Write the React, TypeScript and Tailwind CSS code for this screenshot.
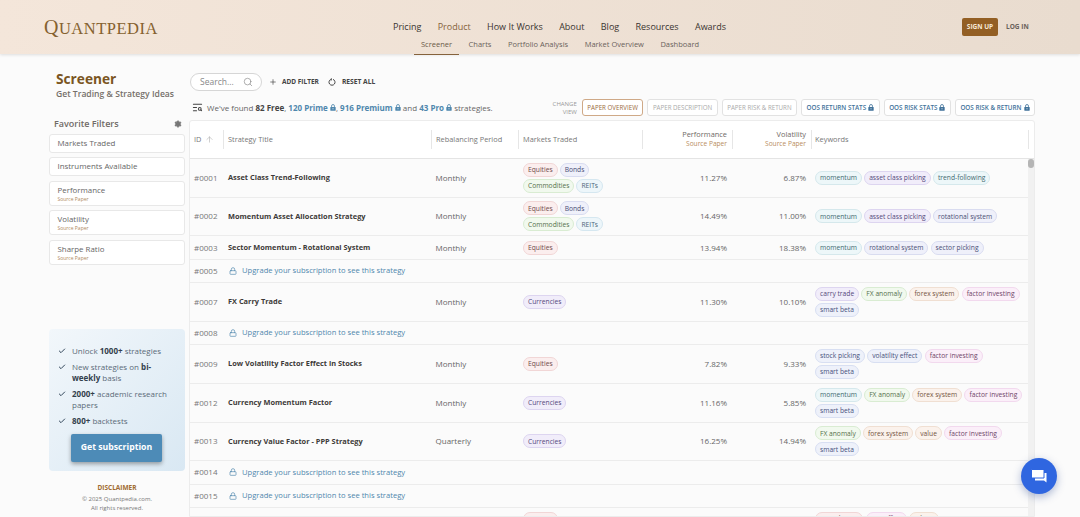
import { ArrowUp, Check, Lock, Plus, Search, Settings, TextSearch } from "lucide-react";

type Tone = "red" | "indigo" | "green" | "sky" | "violet" | "teal" | "peach" | "pink" | "blue";

const toneClass: Record<Tone, string> = {
  red: "bg-[#fbeeee] border-[#f1d6d6] text-[#6e4a4a]",
  indigo: "bg-[#eff0fa] border-[#d9dcf0] text-[#4a4f75]",
  green: "bg-[#f1f9ee] border-[#d9ecd2] text-[#55704c]",
  sky: "bg-[#edf6fa] border-[#d5e7f0] text-[#4a6578]",
  violet: "bg-[#f1edfa] border-[#ddd5f0] text-[#54487a]",
  teal: "bg-[#edf7f9] border-[#d5e8ec] text-[#3f6a70]",
  peach: "bg-[#fbf2ec] border-[#f0dfd2] text-[#75543f]",
  pink: "bg-[#fbeff9] border-[#f2d9ee] text-[#6f4568]",
  blue: "bg-[#eef1fa] border-[#d8dff2] text-[#46507a]",
};

const marketTones: Record<string, Tone> = {
  Equities: "red",
  Bonds: "indigo",
  Commodities: "green",
  REITs: "sky",
  Currencies: "violet",
};

const keywordTones: Record<string, Tone> = {
  momentum: "teal",
  "asset class picking": "violet",
  "trend-following": "teal",
  "rotational system": "indigo",
  "sector picking": "indigo",
  "carry trade": "violet",
  "FX anomaly": "green",
  "forex system": "peach",
  "factor investing": "pink",
  "smart beta": "blue",
  "stock picking": "blue",
  "volatility effect": "blue",
  value: "peach",
  "capital asset": "red",
  "size effect": "pink",
  others: "peach",
};

type Row = {
  id: string;
  tall?: boolean;
  title?: string;
  period?: string;
  markets?: string[];
  perf?: string;
  vol?: string;
  keywords?: string[];
};

const rows: Row[] = [
  { id: "#0001", tall: true, title: "Asset Class Trend-Following", period: "Monthly", markets: ["Equities", "Bonds", "Commodities", "REITs"], perf: "11.27%", vol: "6.87%", keywords: ["momentum", "asset class picking", "trend-following"] },
  { id: "#0002", tall: true, title: "Momentum Asset Allocation Strategy", period: "Monthly", markets: ["Equities", "Bonds", "Commodities", "REITs"], perf: "14.49%", vol: "11.00%", keywords: ["momentum", "asset class picking", "rotational system"] },
  { id: "#0003", title: "Sector Momentum - Rotational System", period: "Monthly", markets: ["Equities"], perf: "13.94%", vol: "18.38%", keywords: ["momentum", "rotational system", "sector picking"] },
  { id: "#0005" },
  { id: "#0007", tall: true, title: "FX Carry Trade", period: "Monthly", markets: ["Currencies"], perf: "11.30%", vol: "10.10%", keywords: ["carry trade", "FX anomaly", "forex system", "factor investing", "smart beta"] },
  { id: "#0008" },
  { id: "#0009", tall: true, title: "Low Volatility Factor Effect in Stocks", period: "Monthly", markets: ["Equities"], perf: "7.82%", vol: "9.33%", keywords: ["stock picking", "volatility effect", "factor investing", "smart beta"] },
  { id: "#0012", tall: true, title: "Currency Momentum Factor", period: "Monthly", markets: ["Currencies"], perf: "11.16%", vol: "5.85%", keywords: ["momentum", "FX anomaly", "forex system", "factor investing", "smart beta"] },
  { id: "#0013", tall: true, title: "Currency Value Factor - PPP Strategy", period: "Quarterly", markets: ["Currencies"], perf: "16.25%", vol: "14.94%", keywords: ["FX anomaly", "forex system", "value", "factor investing", "smart beta"] },
  { id: "#0014" },
  { id: "#0015" },
  { id: "#0016", title: "Pulse Trading with Stocks", period: "Daily", markets: ["Equities"], perf: "9.48%", vol: "8.88%", keywords: ["capital asset", "size effect", "others"] },
];

const gridCols = "grid grid-cols-[34px_208px_87px_124px_90px_79px_1fr]";

function Tag({ label, tone }: { label: string; tone: Tone }) {
  return (
    <span className={`inline-flex h-[14px] items-center rounded-full border px-[4px] pt-[1px] text-[6.7px] leading-none ${toneClass[tone]}`}>
      {label}
    </span>
  );
}

// solid padlock used next to the paid plan names
function SolidLock({ className = "" }: { className?: string }) {
  return (
    <svg viewBox="0 0 10 12" className={`inline-block h-[7px] w-[6px] align-[-0.5px] ${className}`}>
      <path d="M2.5 5V3.4a2.5 2.5 0 0 1 5 0V5" fill="none" stroke="currentColor" strokeWidth="1.4" />
      <path d="M1 5h8a.6.6 0 0 1 .6.6v5.2a.6.6 0 0 1-.6.6H1a.6.6 0 0 1-.6-.6V5.600A.6.6 0 0 1 1 5z" fill="currentColor" />
      <circle cx="5" cy="8.200" r="1" fill="#fff" />
    </svg>
  );
}

function StrategyRow({ row }: { row: Row }) {
  return (
    <div className={`${gridCols} ${row.tall ? "h-[38.8px]" : "h-[23.25px]"} shrink-0 items-center border-b border-[#ececec] text-[8px] text-[#666]`}>
      <div className="pl-[4px] text-[#777]">{row.id}</div>
      {row.title ? (
        <>
          <div className="pl-[4px] text-[7.4px] font-bold text-[#3d3a38]">{row.title}</div>
          <div className="pl-[3.500px]">{row.period}</div>
          <div className="flex flex-wrap gap-x-[2px] gap-y-[2px] pr-[20px] pl-[4px]">
            {row.markets?.map((m) => <Tag key={m} label={m} tone={marketTones[m]} />)}
          </div>
          <div className="pr-[6px] text-right">{row.perf}</div>
          <div className="pr-[6px] text-right">{row.vol}</div>
          <div className="flex flex-wrap gap-x-[2.2px] gap-y-[2px] pr-[3px] pl-[3px]">
            {row.keywords?.map((k) => <Tag key={k} label={k} tone={keywordTones[k]} />)}
          </div>
        </>
      ) : (
        <div className="col-span-6 flex items-center gap-[5px] pl-[5px] text-[7.6px] text-[#4f87ad]">
          <Lock className="h-[8px] w-[8px]" strokeWidth={2} />
          Upgrade your subscription to see this strategy
        </div>
      )}
    </div>
  );
}

function HeaderCell({ children, className = "" }: { children: React.ReactNode; className?: string }) {
  return (
    <div className={`flex h-[19px] items-center border-r border-[#e6e6e6] ${className}`}>{children}</div>
  );
}

function PaperHead({ label }: { label: string }) {
  return (
    <div className="leading-[10px]">
      <div className="text-[#6f6a66]">{label}</div>
      <div className="text-[6.6px] text-[#b98d5e]">Source Paper</div>
    </div>
  );
}

function ViewButton({ label, kind }: { label: string; kind: "active" | "plain" | "locked" }) {
  const cls =
    kind === "active"
      ? "border-[#cfa987] text-[#9a6a3c] text-[6.200px]"
      : kind === "plain"
        ? "border-[#e2e2e2] text-[#aaa] text-[6.200px]"
        : "border-[#e2e2e2] font-semibold text-[#41729a] text-[6.300px]";
  return (
    <span className={`flex h-[17px] items-center gap-[2px] rounded-[3px] border bg-white px-[4.5px] whitespace-nowrap ${cls}`}>
      {label}
      {kind === "locked" && <SolidLock />}
    </span>
  );
}

function FilterBox({ label, sub }: { label: string; sub?: boolean }) {
  return (
    <div className={`flex flex-col justify-center rounded-[3px] border border-[#e8e8e8] bg-white px-[7.500px] ${sub ? "h-[25px]" : "h-[19px]"}`}>
      <div className="text-[7.9px] leading-[11px] text-[#666]">{label}</div>
      {sub && <div className="text-[5px] leading-[6px] text-[#b08a5e]">Source Paper</div>}
    </div>
  );
}

function Perk({ children }: { children: React.ReactNode }) {
  return (
    <li className="flex gap-[6px] text-[8px] leading-[11.3px] text-[#5b6b78]">
      <Check className="mt-[2px] h-[8px] w-[8px] shrink-0 text-[#33475b]" strokeWidth={3} />
      <span className="w-[97px]">{children}</span>
    </li>
  );
}

export default function App() {
  return (
    <div className="relative flex h-[517px] w-[1080px] flex-col overflow-hidden bg-[#fbfbfb] font-['Open_Sans',sans-serif]">
      {/* Top bar */}
      <header className="relative z-10 flex h-[54px] shrink-0 bg-gradient-to-r from-[#f4e6da] to-[#e9dccf] shadow-[0_1px_3px_rgba(0,0,0,0.12)]">
        <div className="w-[393px] pt-[15px] pl-[44px] font-['Liberation_Serif',serif] text-[16.5px] leading-[24px] tracking-[0.5px] text-[#85612f]">
          <span className="text-[20px]">Q</span>UANTPEDIA
        </div>
        <div className="flex w-[366px] flex-col items-start">
          <nav className="mt-[20px] flex gap-[16.3px] text-[9px] leading-[14px] text-[#3a3430]">
            <span>Pricing</span>
            <span className="text-[#85623c]">Product</span>
            <span>How It Works</span>
            <span>About</span>
            <span>Blog</span>
            <span>Resources</span>
            <span>Awards</span>
          </nav>
          <nav className="mt-[5px] ml-[21px] flex gap-[16.5px] text-[7.5px] text-[#6a625b]">
            <span className="-mr-[7px] border-b border-[#85623c] px-[7px] pb-[4px] text-[#6a5a48]">Screener</span>
            <span>Charts</span>
            <span>Portfolio Analysis</span>
            <span>Market Overview</span>
            <span>Dashboard</span>
          </nav>
        </div>
        <div className="ml-[203px] mt-[18px] flex h-[18px] items-center">
          <span className="flex h-[18px] w-[36px] items-center justify-center rounded-[2px] bg-[#935f24] text-[6.5px] font-bold text-[#f6e8d6]">SIGN UP</span>
          <span className="ml-[8px] text-[6.5px] font-bold text-[#6a625b]">LOG IN</span>
        </div>
      </header>

      <main className="flex min-h-0 flex-1">
        {/* Sidebar */}
        <aside className="ml-[49px] w-[136px] shrink-0">
          <div className="pt-[16px] pl-[7px]">
            <h1 className="text-[13.7px] leading-[17px] font-bold text-[#7a5522]">Screener</h1>
            <p className="mt-[1px] text-[8.6px] leading-[13px] font-semibold text-[#756f69]">Get Trading &amp; Strategy Ideas</p>
          </div>
          <div className="mt-[16px] flex items-center justify-between pr-[3px] pl-[5px] text-[9px] font-semibold text-[#6f6a66]">
            Favorite Filters
            <Settings className="h-[8px] w-[8px] fill-[#777] text-[#777]" strokeWidth={2} />
          </div>
          <div className="mt-[3px] flex flex-col gap-[4.6px]">
            <FilterBox label="Markets Traded" />
            <FilterBox label="Instruments Available" />
            <FilterBox label="Performance" sub />
            <FilterBox label="Volatility" sub />
            <FilterBox label="Sharpe Ratio" sub />
          </div>
          <div className="mt-[64px] h-[142px] rounded-[4px] bg-gradient-to-br from-[#f2f7fb] to-[#d9e8f3] px-[9px] pt-[16px]">
            <ul className="flex flex-col gap-[4.7px]">
              <Perk>Unlock <b className="text-[#33404c]">1000+</b> strategies</Perk>
              <Perk>New strategies on <b className="text-[#33404c]">bi-weekly</b> basis</Perk>
              <Perk><b className="text-[#33404c]">2000+</b> academic research papers</Perk>
              <Perk><b className="text-[#33404c]">800+</b> backtests</Perk>
            </ul>
            <div className="mt-[7px] ml-[13px] flex h-[28px] w-[91px] items-center justify-center rounded-[2px] bg-[#4d8bb7] text-[8.7px] font-bold text-white shadow-[0_2px_4px_rgba(0,0,0,0.35)]">
              Get subscription
            </div>
          </div>
          <div className="mt-[12px] text-center text-[6px] leading-[9px] text-[#777]">
            <div className="text-[6.5px] font-bold text-[#a06c30]">DISCLAIMER</div>
            <div className="mt-[3px]">© 2025 Quantpedia.com.</div>
            <div>All rights reserved.</div>
          </div>
        </aside>

        {/* Content */}
        <section className="ml-[4px] flex w-[846px] min-w-0 flex-col">
          <div className="mt-[19px] flex h-[18px] shrink-0 items-center">
            <div className="ml-[1px] flex h-[18px] w-[72px] items-center justify-between rounded-full border border-[#d6d6d6] bg-white pr-[8px] pl-[9px] text-[8.5px] text-[#888]">
              Search...
              <Search className="h-[10px] w-[10px]" strokeWidth={1.6} />
            </div>
            <Plus className="ml-[7px] h-[8px] w-[8px] text-[#444]" strokeWidth={2} />
            <span className="ml-[5px] text-[6.5px] font-bold text-[#444]">ADD FILTER</span>
            <svg viewBox="0 0 12 12" className="ml-[9px] h-[8px] w-[8px] text-[#444]" fill="none" stroke="currentColor" strokeWidth="1.5">
              <path d="M7.6 2.100a4.500 4.500 0 1 1-3.200 0" />
              <path d="M4.200 .4 6 2.100 4.200 3.800" />
            </svg>
            <span className="ml-[6px] text-[6.7px] font-bold text-[#444]">RESET ALL</span>
          </div>
          <div className="mt-[5px] flex h-[23px] shrink-0 items-center">
            <TextSearch className="ml-[3px] h-[11px] w-[11px] text-[#444]" strokeWidth={2.2} />
            <span className="ml-[4px] text-[8px] whitespace-nowrap text-[#666]">
              We've found <b className="text-[#444]">82 Free</b>, <b className="text-[#4f87ad]">120 Prime <SolidLock /></b>, <b className="text-[#4f87ad]">916 Premium <SolidLock /></b> and <b className="text-[#4f87ad]">43 Pro <SolidLock /></b> strategies.
            </span>
            <span className="ml-auto w-[29px] text-right text-[6px] leading-[8px] text-[#999]">CHANGE<br />VIEW</span>
            <div className="ml-[5px] flex gap-[4px]">
              <ViewButton label="PAPER OVERVIEW" kind="active" />
              <ViewButton label="PAPER DESCRIPTION" kind="plain" />
              <ViewButton label="PAPER RISK & RETURN" kind="plain" />
              <ViewButton label="OOS RETURN STATS" kind="locked" />
              <ViewButton label="OOS RISK STATS" kind="locked" />
              <ViewButton label="OOS RISK & RETURN" kind="locked" />
            </div>
          </div>

          {/* Table */}
          <div className="relative mt-[1px] flex min-h-0 flex-1 flex-col overflow-hidden rounded-t-[3px] border-x border-t border-b border-[#ececec] bg-white">
            <div className={`${gridCols} h-[37.8px] shrink-0 items-center border-b border-[#e4e4e4] text-[7.4px] text-[#777]`}>
              <HeaderCell className="gap-[4px] pl-[4px]">ID <ArrowUp className="h-[9px] w-[9px] text-[#aaa]" strokeWidth={1.5} /></HeaderCell>
              <HeaderCell className="pl-[4px]">Strategy Title</HeaderCell>
              <HeaderCell className="pl-[4px]">Rebalancing Period</HeaderCell>
              <HeaderCell className="pl-[4px]">Markets Traded</HeaderCell>
              <HeaderCell className="justify-end pr-[5px] text-right"><PaperHead label="Performance" /></HeaderCell>
              <HeaderCell className="justify-end pr-[5px] text-right"><PaperHead label="Volatility" /></HeaderCell>
              <HeaderCell className="mr-[5px] pl-[3px]">Keywords</HeaderCell>
            </div>
            <div className="flex min-h-0 flex-1">
              <div className="flex w-[838px] shrink-0 flex-col bg-[#fbfbfb]">
                {rows.map((r) => <StrategyRow key={r.id} row={r} />)}
              </div>
              <div className="flex-1 bg-[#f1f1f1]">
                <div className="h-[9px] rounded-[3px] bg-[#b5b5b5]" />
              </div>
            </div>
          </div>
        </section>
      </main>

      {/* Chat bubble */}
      <div className="absolute top-[458px] left-[1021px] flex h-[36px] w-[36px] items-center justify-center rounded-full bg-[#2f66e0] shadow-[0_3px_8px_rgba(30,60,140,0.35)]">
        <svg viewBox="0 0 16 15" className="h-[15px] w-[16px]">
          <path d="M4 4h11.500v9.500l-2.500-2H4z" fill="#fff" />
          <path d="M.5.5h12.500v8.500H.5z" fill="#fff" stroke="#2f66e0" strokeWidth="1" />
        </svg>
      </div>
    </div>
  );
}
